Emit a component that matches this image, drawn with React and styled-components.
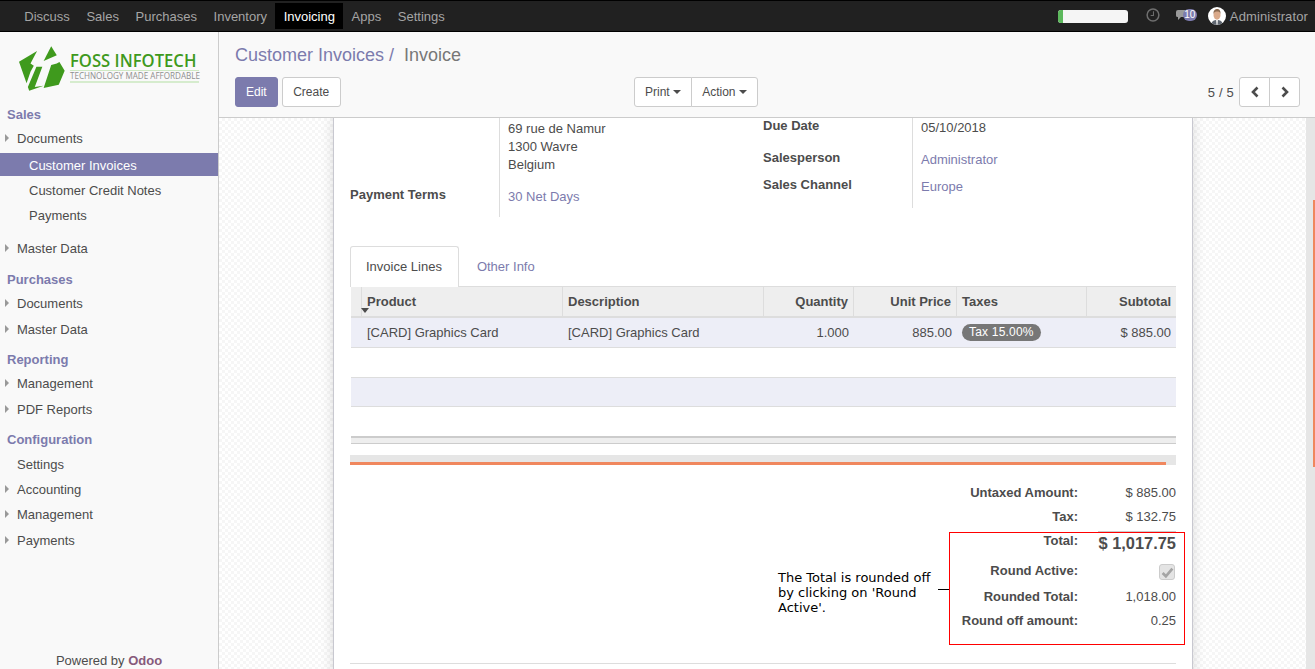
import React from "react";
import styled, { createGlobalStyle } from "styled-components";

const purple = "#7c7bad";
const ink = "#4c4c4c";

const Global = createGlobalStyle`
  html, body { margin: 0; padding: 0; height: 100%; overflow: hidden; }
  body { font-family: "Liberation Sans", Arial, sans-serif; font-size: 13px; color: ${ink}; background: #fff; }
  * { box-sizing: border-box; }
`;

const Page = styled.div`display: flex; flex-direction: column; width: 1315px; height: 669px; overflow: hidden;`;

const TopBar = styled.header`
  flex: none; height: 32px; background: #212121; border-top: 1px solid #000; border-bottom: 1px solid #000;
  display: flex; align-items: center; justify-content: space-between; padding: 0 7px 0 16px;
`;
const TopNav = styled.nav`display: flex; align-items: center;`;
const TopLink = styled.span`
  height: 26px; line-height: 27px; padding: 0 8.3px;
  color: ${p => (p.$active ? "#fff" : "#a5a5a5")}; background: ${p => (p.$active ? "#000" : "transparent")};
`;
const SysTray = styled.div`display: flex; align-items: center;`;
const Progress = styled.div`
  width: 70px; height: 13px; border-radius: 3px; background: #f5f5f5; overflow: hidden; margin-right: 18px; margin-top: 1px;
`;
const ProgressFill = styled.div`width: 5px; height: 100%; background: #5cb85c;`;
const ClockIcon = styled.svg`width: 14px; height: 14px; margin-right: 16px; margin-top: -2px; display: block;`;
const Chat = styled.div`display: flex; align-items: center; margin-right: 11px; margin-top: -2px;`;
const ChatBubble = styled.svg`width: 11px; height: 10px; display: block; margin-right: -4px; margin-top: -1px;`;
const ChatBadge = styled.span`
  position: relative; background: ${purple}; color: #fff; font-size: 10px; line-height: 12px; height: 12px; width: 14px; text-align: center; border-radius: 6px;
`;
const Avatar = styled.svg`width: 18px; height: 18px; display: block; border-radius: 50%; margin-right: 4px;`;
const UserName = styled.span`color: #a5a5a5; letter-spacing: .12px;`;

const Body = styled.div`flex: 1; display: flex; min-height: 0;`;

const Sidebar = styled.aside`
  flex: none; width: 219px; background: #f9f9f9; border-right: 1px solid #ccc;
  display: flex; flex-direction: column;
`;
const LogoWrap = styled.div`height: 73px; padding: 14px 0 0 19px; display: flex; gap: 5px;`;
const LogoMark = styled.svg`width: 46px; height: 46px; display: block; flex: none;`;
const LogoText = styled.div`width: 129px; padding-top: 4px;`;
const LogoName = styled.div`
  font-family: "Open Sans", sans-serif; font-weight: 600; font-size: 18.4px; line-height: 20px; color: #3f9a1d; white-space: nowrap;
  transform: scaleX(.905); transform-origin: left center;
`;
const LogoTag = styled.div`
  border-top: 1px solid #cfe8c4; border-bottom: 2px solid #d6ecce; height: 13px;
  font-family: "Open Sans", sans-serif; font-size: 8.1px; line-height: 10px; color: #8f8f8f; white-space: nowrap;
`;
const MenuHeading = styled.div`
  height: 18px; line-height: 18px; padding-left: 7px; font-weight: 700; color: ${purple}; margin-top: ${p => p.$top ?? 9}px; margin-bottom: 2px;
`;
const MenuItem = styled.div`
  position: relative; height: 23px; line-height: 25px; margin-top: ${p => p.$mt ?? 0}px; margin-bottom: 2px; white-space: nowrap;
  padding-left: ${p => (p.$sub ? 29 : 17)}px;
  color: ${p => (p.$selected ? "#fff" : ink)}; background: ${p => (p.$selected ? purple : "transparent")};
  ${p => p.$caret && `&::before { content: ""; position: absolute; left: 5px; top: 8px; border-left: 4px solid #999; border-top: 4px solid transparent; border-bottom: 4px solid transparent; }`}
`;
const Powered = styled.div`margin-top: auto; text-align: center; height: 18px; line-height: 20px;`;
const Odoo = styled.b`color: #875a7b;`;

const Main = styled.main`flex: 1; display: flex; flex-direction: column; min-width: 0;`;
const ControlPanel = styled.div`
  flex: none; height: 86px; background: #f9f9f9; border-bottom: 1px solid #ccc; padding: 10px 15px 0 16px;
`;
const Breadcrumb = styled.div`font-size: 18px; line-height: 27px; height: 35px; white-space: pre;`;
const Crumb = styled.span`color: ${purple};`;
const Current = styled.span`color: #777; margin-left: 5px;`;
const Controls = styled.div`display: grid; grid-template-columns: 399px auto 1fr; align-items: center;`;
const BtnGroup = styled.div`display: flex; gap: ${p => p.$gap ?? 0}px; justify-self: ${p => p.$end ? "end" : "start"}; align-items: center;`;
const Btn = styled.button`
  height: 30px; font: 12px "Liberation Sans", Arial, sans-serif; padding: 0 ${p => p.$pad ?? 10.5}px; border-radius: 3px; cursor: pointer;
  border: 1px solid ${p => (p.$primary ? purple : "#ccc")}; background: ${p => (p.$primary ? purple : "#fff")}; color: ${p => (p.$primary ? "#fff" : ink)};
  display: flex; align-items: center; gap: 3px;
`;
const JoinBtn = styled(Btn)`
  ${p => p.$first ? "border-top-right-radius: 0; border-bottom-right-radius: 0;" : "border-top-left-radius: 0; border-bottom-left-radius: 0; margin-left: -1px;"}
`;
const Caret = styled.i`width: 0; height: 0; border-top: 4px solid ${ink}; border-left: 4px solid transparent; border-right: 4px solid transparent;`;
const PagerText = styled.span`margin-right: 5px; letter-spacing: .2px;`;
const PagerBtn = styled(JoinBtn)`width: ${p => p.$w}px; padding: 0; justify-content: center;`;
const Chevron = styled.svg`width: 12px; height: 12px; display: block;`;

const Work = styled.div`flex: 1; display: flex; min-height: 0;`;
const Canvas = styled.div`
  flex: 1; display: flex; justify-content: center; overflow: hidden; min-width: 0; padding-left: 1px;
  background: conic-gradient(#f6f6f6 25%, #fff 0 50%, #f6f6f6 0 75%, #fff 0) 0 0 / 6px 6px;
`;
const Sheet = styled.section`
  position: relative; width: 860px; height: 600px; flex: none; background: #fff; padding: 0 16px;
  border-left: 1px solid #c8c8d0; border-right: 1px solid #c8c8d0; box-shadow: 0 0 12px rgba(0,0,0,.14);
`;
const Scrollbar = styled.div`position: relative; flex: none; width: 9px; background: #e6e6e6;`;
const Thumb = styled.div`position: absolute; right: 0; top: 82px; width: 2px; height: 267px; background: #f0875e;`;

const FormGrid = styled.div`display: grid; grid-template-columns: 413px 1fr; height: 99px;`;
const FieldGroup = styled.div`
  display: grid; grid-template-columns: ${p => p.$label}px 1fr; grid-template-rows: ${p => p.$rows};
  height: ${p => p.$h}px;
`;
const Label = styled.div`font-weight: 700; color: ${ink}; margin-top: ${p => p.$top ?? 0}px; line-height: 18px;`;
const Value = styled.div`
  border-left: 1px solid #ddd; padding-left: 8px; padding-top: ${p => p.$top ?? 0}px; line-height: 18px;
  color: ${p => (p.$link ? purple : ink)};
`;

const Tabs = styled.div`display: flex; height: 41px; margin-top: 29px; align-items: stretch;`;
const Tab = styled.div`
  padding: 0 ${p => (p.$active ? 16 : 15)}px 0 15px; line-height: 40px; height: ${p => (p.$active ? 41 : 40)}px; position: relative; z-index: 1;
  color: ${p => (p.$active ? ink : purple)}; background: #fff; margin-right: ${p => (p.$active ? 2 : 0)}px;
  border: 1px solid ${p => (p.$active ? "#ddd" : "transparent")}; border-bottom: 0; border-radius: 3px 3px 0 0;
`;
const cols = "10px 201px 201px 90px 103px 130px 90px";
const HeadRow = styled.div`
  display: grid; grid-template-columns: ${cols}; height: 32px; margin-left: 1px; width: 825px; background: #eee;
  border-top: 1px solid #ddd; border-bottom: 2px solid #ddd; margin-top: -1px;
`;
const HeadCell = styled.div`
  position: relative; padding: 0 5px; border-left: ${p => (p.$noBorder ? "0" : "1px solid #ddd")}; line-height: 30px; font-weight: 700; white-space: nowrap;
  text-align: ${p => (p.$right ? "right" : "left")};
`;
const SortCaret = styled.i`position: absolute; left: -1px; top: 21px; width: 0; height: 0; border-top: 5px solid ${ink}; border-left: 4px solid transparent; border-right: 4px solid transparent;`;
const LineRow = styled.div`
  display: grid; grid-template-columns: ${cols}; height: ${p => p.$h ?? 30}px; margin-left: 1px; width: 825px;
  background: ${p => (p.$tint ? "#edeef7" : "#fff")}; border-bottom: 1px solid ${p => (p.$line ? "#ddd" : "transparent")};
`;
const LineCell = styled.div`
  padding: 0 ${p => (p.$right ? 4 : 5)}px 0 6px; line-height: 29px; white-space: nowrap; text-align: ${p => (p.$right ? "right" : "left")};
  &:last-child { padding-right: 5px; }
`;
const Tag = styled.span`
  display: inline-block; background: #777; color: #fff; font-size: 12px; letter-spacing: .2px; line-height: 17px; height: 17px; padding: 0 7px; border-radius: 9px; vertical-align: 1px;
`;
const Foot = styled.div`
  height: 8px; margin-left: 1px; width: 825px; background: #eee; border-top: 2px solid #ccc; border-bottom: 1px solid #ccc;
`;
const ProgressTrack = styled.div`
  margin-top: 11px; height: 10px; background: #e6e6e6; display: flex; align-items: flex-end;
`;
const ProgressLine = styled.div`width: 816px; height: 3px; background: #f0875e;`;

const Totals = styled.div`margin-top: 19px; margin-left: auto; width: 240px; height: 198px; position: relative; display: flex; flex-direction: column;`;
const TotalRow = styled.div`
  display: grid; grid-template-columns: 142px 98px; height: ${p => p.$h}px; line-height: 18px;
`;
const TotalLabel = styled.div`font-weight: 700; text-align: right; white-space: nowrap;`;
const TotalValue = styled.div`
  justify-self: end; text-align: right; white-space: nowrap; width: 78px;
  ${p => p.$big && `border-top: 1px solid #ccc; font-weight: 700; font-size: 16.4px; line-height: 21px; margin-top: -1px; padding-top: 1px; height: 26px;`}
`;
const CheckBox = styled.div`
  width: 16px; height: 16px; margin: 2px 1px 0 auto; border: 1px solid #ccc; background: #e4e4e4; border-radius: 3px; display: flex; align-items: center; justify-content: center;
`;
const CheckSvg = styled.svg`width: 13px; height: 13px; display: block;`;
const BottomRule = styled.div`position: absolute; left: 16px; right: 16px; top: 545px; height: 1px; background: #ddd;`;

const Callout = styled.div`
  position: absolute; left: 615px; top: 414px; width: 236px; height: 113px; border: 1px solid #f00; pointer-events: none;
`;
const Note = styled.div`
  position: absolute; left: 444px; top: 452px; width: 160px; font-family: "DejaVu Sans", sans-serif; font-size: 13px; line-height: 15px; color: #000;
`;
const Leader = styled.div`position: absolute; left: 604px; top: 471px; width: 11px; height: 1px; background: #000;`;

const Left = () => <Chevron viewBox="0 0 12 12"><path d="M8.500 1.500 4 6l4.500 4.500" fill="none" stroke="#4c4c4c" strokeWidth="2.600" /></Chevron>;
const Right = () => <Chevron viewBox="0 0 12 12"><path d="M3.500 1.500 8 6l-4.500 4.500" fill="none" stroke="#4c4c4c" strokeWidth="2.600" /></Chevron>;

export default function App() {
  return (
    <Page>
      <Global />
      <TopBar>
        <TopNav>
          <TopLink>Discuss</TopLink>
          <TopLink>Sales</TopLink>
          <TopLink>Purchases</TopLink>
          <TopLink>Inventory</TopLink>
          <TopLink $active>Invoicing</TopLink>
          <TopLink>Apps</TopLink>
          <TopLink>Settings</TopLink>
        </TopNav>
        <SysTray>
          <Progress><ProgressFill /></Progress>
          <ClockIcon viewBox="0 0 15 15">
            <circle cx="7.500" cy="7.500" r="6.300" fill="none" stroke="#6f6f6f" strokeWidth="1.600" />
            <path d="M8 3.500V8H5" fill="none" stroke="#6f6f6f" strokeWidth="1.100" />
          </ClockIcon>
          <Chat>
            <ChatBubble viewBox="0 0 11 10"><path d="M2 0h8a1.500 1.500 0 0 1 1 1v5a1.500 1.500 0 0 1-1 1H5L2 10V7H1.500A1.500 1.500 0 0 1 0 5.500V2a2 2 0 0 1 2-2z" fill="#9a9a9a" /></ChatBubble>
            <ChatBadge>10</ChatBadge>
          </Chat>
          <Avatar viewBox="0 0 18 18">
            <rect width="18" height="18" fill="#fff" />
            <path d="M3 18c.5-4 3-5 6-5s5.500 1 6 5z" fill="#5f6670" />
            <path d="M8 13h2l-.5 5h-1z" fill="#e9e9e9" />
            <ellipse cx="9" cy="8" rx="3.500" ry="4.700" fill="#d9a98a" />
            <path d="M5.500 7c-.3-4 2-5 3.700-5s3.600 1 3.300 5c-.7-2-1.500-2.500-3.300-2.500S6.200 5 5.500 7z" fill="#8a6a50" />
          </Avatar>
          <UserName>Administrator</UserName>
        </SysTray>
      </TopBar>
      <Body>
        <Sidebar>
          <LogoWrap>
            <LogoMark viewBox="57 138 140 138">
              <path d="M57 185 112 152 92 190 102 197 92 215 80 250Z" fill="#3f9a1d" />
              <path d="M155 138 172 165 132 183Z" fill="#3f9a1d" />
              <path d="M172 190 180 186 196 212 178 255 132 265 155 195Z" fill="#3f9a1d" />
              <path d="M110 200 128 200 105 262 132 258 88 273 84 262Z" fill="#3f9a1d" />
            </LogoMark>
            <LogoText>
              <LogoName>FOSS INFOTECH</LogoName>
              <LogoTag>TECHNOLOGY MADE AFFORDABLE</LogoTag>
            </LogoText>
          </LogoWrap>
          <MenuHeading $top={1}>Sales</MenuHeading>
          <MenuItem $caret>Documents</MenuItem>
          <MenuItem $sub $selected $mt={2}>Customer Invoices</MenuItem>
          <MenuItem $sub>Customer Credit Notes</MenuItem>
          <MenuItem $sub>Payments</MenuItem>
          <MenuItem $caret $mt={8}>Master Data</MenuItem>
          <MenuHeading $top={10}>Purchases</MenuHeading>
          <MenuItem $caret>Documents</MenuItem>
          <MenuItem $caret $mt={1}>Master Data</MenuItem>
          <MenuHeading>Reporting</MenuHeading>
          <MenuItem $caret>Management</MenuItem>
          <MenuItem $caret $mt={1}>PDF Reports</MenuItem>
          <MenuHeading>Configuration</MenuHeading>
          <MenuItem $mt={1}>Settings</MenuItem>
          <MenuItem $caret>Accounting</MenuItem>
          <MenuItem $caret>Management</MenuItem>
          <MenuItem $caret $mt={1}>Payments</MenuItem>
          <Powered>Powered by <Odoo>Odoo</Odoo></Powered>
        </Sidebar>
        <Main>
          <ControlPanel>
            <Breadcrumb><Crumb>Customer Invoices /</Crumb> <Current>Invoice</Current></Breadcrumb>
            <Controls>
              <BtnGroup $gap={4}>
                <Btn $primary $pad={10}>Edit</Btn>
                <Btn>Create</Btn>
              </BtnGroup>
              <BtnGroup>
                <JoinBtn $first $pad={10}>Print <Caret /></JoinBtn>
                <JoinBtn>Action <Caret /></JoinBtn>
              </BtnGroup>
              <BtnGroup $end>
                <PagerText>5 / 5</PagerText>
                <PagerBtn $first $w={31}><Left /></PagerBtn>
                <PagerBtn $w={31}><Right /></PagerBtn>
              </BtnGroup>
            </Controls>
          </ControlPanel>
          <Work>
            <Canvas>
              <Sheet>
                <FormGrid>
                  <FieldGroup $label={149} $rows="66px 33px" $h={99}>
                    <div />
                    <Value $top={2}>69 rue de Namur<br />1300 Wavre<br />Belgium</Value>
                    <Label $top={2}>Payment Terms</Label>
                    <Value $link $top={4}>30 Net Days</Value>
                  </FieldGroup>
                  <FieldGroup $label={149} $rows="31px 27px 32px" $h={90}>
                    <Label $top={-1}>Due Date</Label>
                    <Value $top={1}>05/10/2018</Value>
                    <Label>Salesperson</Label>
                    <Value $link $top={2}>Administrator</Value>
                    <Label>Sales Channel</Label>
                    <Value $link $top={2}>Europe</Value>
                  </FieldGroup>
                </FormGrid>
                <Tabs>
                  <Tab $active>Invoice Lines</Tab>
                  <Tab>Other Info</Tab>
                </Tabs>
                <HeadRow>
                  <HeadCell $noBorder />
                  <HeadCell>Product<SortCaret /></HeadCell>
                  <HeadCell>Description</HeadCell>
                  <HeadCell $right>Quantity</HeadCell>
                  <HeadCell $right>Unit Price</HeadCell>
                  <HeadCell>Taxes</HeadCell>
                  <HeadCell $right>Subtotal</HeadCell>
                </HeadRow>
                <LineRow $tint $line>
                  <LineCell />
                  <LineCell>[CARD] Graphics Card</LineCell>
                  <LineCell>[CARD] Graphics Card</LineCell>
                  <LineCell $right>1.000</LineCell>
                  <LineCell $right>885.00</LineCell>
                  <LineCell><Tag>Tax 15.00%</Tag></LineCell>
                  <LineCell $right>$ 885.00</LineCell>
                </LineRow>
                <LineRow $line />
                <LineRow $tint $line $h={29} />
                <LineRow $h={29} />
                <Foot />
                <ProgressTrack><ProgressLine /></ProgressTrack>
                <Totals>
                  <TotalRow $h={24}><TotalLabel>Untaxed Amount:</TotalLabel><TotalValue>$ 885.00</TotalValue></TotalRow>
                  <TotalRow $h={24}><TotalLabel>Tax:</TotalLabel><TotalValue>$ 132.75</TotalValue></TotalRow>
                  <TotalRow $h={30}><TotalLabel>Total:</TotalLabel><TotalValue $big>$ 1,017.75</TotalValue></TotalRow>
                  <TotalRow $h={26}>
                    <TotalLabel>Round Active:</TotalLabel>
                    <CheckBox><CheckSvg viewBox="0 0 12 12"><path d="M1.500 6.500 4.500 9.500 10.500 2.500" fill="none" stroke="#a5a5a5" strokeWidth="2.500" /></CheckSvg></CheckBox>
                  </TotalRow>
                  <TotalRow $h={24}><TotalLabel>Rounded Total:</TotalLabel><TotalValue>1,018.00</TotalValue></TotalRow>
                  <TotalRow $h={24}><TotalLabel>Round off amount:</TotalLabel><TotalValue>0.25</TotalValue></TotalRow>
                </Totals>
                <BottomRule />
                <Callout />
                <Leader />
                <Note>The Total is rounded off by clicking on 'Round Active'.</Note>
              </Sheet>
            </Canvas>
            <Scrollbar><Thumb /></Scrollbar>
          </Work>
        </Main>
      </Body>
    </Page>
  );
}
